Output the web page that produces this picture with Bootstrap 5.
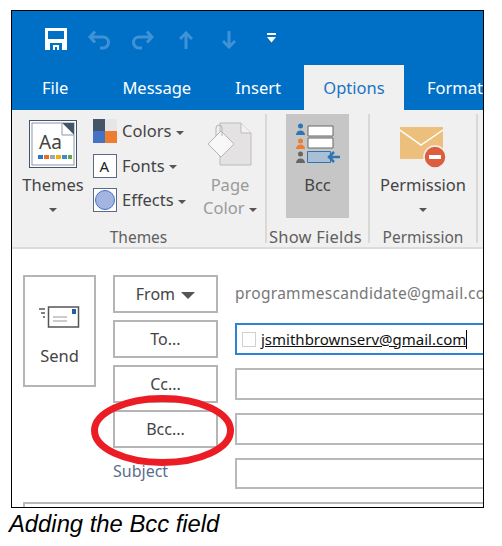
<!DOCTYPE html>
<html lang="en">
<head>
  <meta charset="UTF-8">
  <title>Adding the Bcc field</title>
  <meta name="viewport" content="width=device-width, initial-scale=1">
  <link href="https://cdn.jsdelivr.net/npm/bootstrap@5.3.0/dist/css/bootstrap.min.css" rel="stylesheet">
  <style>
    body { background: #fff; margin: 0; width: 502px; height: 546px; overflow: hidden; font-family: "Noto Sans", sans-serif; }
    .shot { position: relative; margin: 10px 0 0 11px; width: 473px; height: 498px; border: 1px solid #000; overflow: hidden; }
    .title-bar { height: 54px; background: #0070c6; padding-left: 33px; }
    .qat { width: 43px; }
    .tab-bar { height: 45px; background: #0070c6; }
    .tab-item { color: #fff; font-size: 16.500px; line-height: 45px; white-space: nowrap; }
    .tab-active { width: 103px; background: #f0f0f0; color: #1a74c4; text-align: center; }
    .ribbon { height: 139px; background: #f0f0f0; border-bottom: 2px solid #dcdcdc; padding-top: 4px; }
    .rb-group { height: 129px; border-right: 2px solid #d9d9d9; flex: none; }
    .rb-body { height: 104px; }
    .rb-label { text-align: center; color: #5f5f5f; font-size: 15.500px; line-height: 20px; margin-top: 9px; white-space: nowrap; }
    .rb-label-wide { font-size: 16.500px; letter-spacing: .2px; margin-right: 4px; }
    .rb-tool { text-align: center; color: #444; font-size: 16.500px; line-height: 23px; white-space: nowrap; }
    .rb-icon { height: 59px; }
    .rb-muted { color: #9a9a9a; }
    .rb-on { background: #c6c6c6; }
    .rb-small { font-size: 16.500px; color: #444; height: 34.500px; line-height: 24px; white-space: nowrap; }
    .rb-small svg { margin-right: 5px; flex: none; }
    .drop { display: inline-block; width: 0; height: 0; border-left: 4px solid transparent; border-right: 4px solid transparent; border-top: 4px solid #555; vertical-align: middle; }
    .mail-form { padding: 26px 0 0 11px; }
    .send-box { width: 73px; height: 112px; border: 2px solid #b5b5b5; margin-right: 17px; flex: none; font-size: 16.500px; color: #444; }
    .field-row { height: 38px; margin-bottom: 7px; }
    .addr-btn { width: 105px; height: 38px; flex: none; margin-right: 17px; padding: 0; background: #fff; border: 2px solid #b5b5b5; border-radius: 0; font-size: 16px; color: #444; }
    .addr-btn:hover { background: #fff; border-color: #b5b5b5; color: #444; }
    .from-caret { border-left-width: 7px; border-right-width: 7px; border-top-width: 7px; margin-left: 2px; }
    .addr-box { flex: none; width: 260px; height: 32px; border: 2px solid #b9b9b9; border-radius: 0; padding: 0 0 0 5px; background: #fff; }
    .addr-focus { border-color: #2a86d4; }
    .from-mail { color: #777; font-size: 15.500px; letter-spacing: .3px; white-space: nowrap; }
    .chk-box { width: 14px; height: 15px; border: 1px solid #d0d0d0; margin-right: 5px; flex: none; }
    .to-mail { font-size: 15px; color: #111; text-decoration: underline; border-right: 1px solid #000; line-height: 19px; white-space: nowrap; }
    .subject-label { width: 105px; margin-right: 17px; flex: none; color: #5a6d8f; font-size: 16px; padding-top: 4px; }
    .subject-row { height: 46px; }
    .subject-box { margin-top: 3px; height: 31px; }
    .body-box { height: 12px; margin-top: 1px; border: 2px solid #b9b9b9; border-right: 0; border-bottom: 0; }
    .red-ring { position: absolute; left: 78px; top: 383px; }
    .caption { margin: 2px 0 0 9px; font-family: "Liberation Sans", sans-serif; font-style: italic; font-size: 23.800px; line-height: 28px; color: #000; white-space: nowrap; }
  </style>
</head>
<body>
  <div class="shot">
    <!-- quick access -->
    <div class="title-bar d-flex align-items-center">
      <div class="qat">
        <svg width="22" height="22" viewBox="0 0 22 22"><path d="M0 0h22v22H0z" fill="#fff"/><path d="M3 3h16v8H3z" fill="#0070c6"/><path d="M5 15h12v7H5z" fill="#0070c6"/><path d="M8 17h6v5h-2v-3h-2v3H8z" fill="#fff"/></svg>
      </div>
      <div class="qat">
        <svg width="23" height="20" viewBox="0 0 23 20"><path d="M2 7h13a5.500 5.500 0 0 1 0 11h-3M7 1.500 2 7l5 5.500" fill="none" stroke="#3f92d6" stroke-width="3"/></svg>
      </div>
      <div class="qat" style="width:48px">
        <svg width="23" height="20" viewBox="0 0 23 20"><path d="M21 7H8a5.500 5.500 0 0 0 0 11h3M16 1.500 21 7l-5 5.500" fill="none" stroke="#3f92d6" stroke-width="3"/></svg>
      </div>
      <div class="qat">
        <svg width="14" height="18" viewBox="0 0 14 18"><path d="M7 18V2M1 8l6-6 6 6" fill="none" stroke="#3f92d6" stroke-width="3"/></svg>
      </div>
      <div class="qat" style="width:45px">
        <svg width="14" height="18" viewBox="0 0 14 18"><path d="M7 0v16M1 10l6 6 6-6" fill="none" stroke="#3f92d6" stroke-width="3"/></svg>
      </div>
      <svg width="9" height="10" viewBox="0 0 9 10"><path d="M0 0h9v2H0z" fill="#fff"/><path d="M0 4h9L4.500 9.500z" fill="#fff"/></svg>
    </div>

    <!-- tabs -->
    <div class="tab-bar d-flex">
      <div class="tab-item" style="margin-left:30px">File</div>
      <div class="tab-item" style="margin-left:54px">Message</div>
      <div class="tab-item" style="margin-left:44px">Insert</div>
      <div class="tab-item tab-active" style="margin-left:23px">Options</div>
      <div class="tab-item" style="margin-left:23px">Format</div>
    </div>

    <!-- ribbon -->
    <div class="ribbon d-flex">
      <div class="rb-group" style="width:255px">
        <div class="rb-body d-flex">
          <div class="rb-tool" style="width:62px;margin-left:10px">
            <div class="rb-icon d-flex align-items-center justify-content-center">
              <svg width="48" height="48" viewBox="0 0 48 48"><rect x=".5" y=".5" width="47" height="47" fill="#fff" stroke="#44546a"/><rect x="3" y="3" width="42" height="42" fill="#fff" stroke="#8a97a8"/><path d="M33 3h12v12z" fill="#44546a"/><path d="M33 3v12h12" fill="#fff" stroke="#8a97a8"/><text x="10" y="29" font-family="Noto Sans, sans-serif" font-size="19" fill="#444">Aa</text><path d="M9 35h5v4H9z" fill="#2f75c4"/><path d="M15 35h5v4h-5z" fill="#ed6c1f"/><path d="M21 35h5v4h-5z" fill="#a5a5a5"/><path d="M27 35h5v4h-5z" fill="#f0b400"/><path d="M33 35h5v4h-5z" fill="#3b8bd8"/><path d="M39 35h4v4h-4z" fill="#5ea83c"/></svg>
            </div>
            <div>Themes</div>
            <div><span class="drop"></span></div>
          </div>
          <div style="width:107px;margin-left:9px;padding-top:5px">
            <div class="rb-small d-flex align-items-start">
              <svg width="24" height="24" viewBox="0 0 24 24"><path d="M0 0h12v12H0z" fill="#44546a"/><path d="M12 0h12v12H12z" fill="#e7e6e6"/><path d="M0 12h12v12H0z" fill="#4472c4"/><path d="M12 12h12v12H12z" fill="#ed7d31"/></svg>
              <span>Colors <span class="drop"></span></span>
            </div>
            <div class="rb-small d-flex align-items-start">
              <svg width="24" height="24" viewBox="0 0 24 24"><rect x=".5" y=".5" width="23" height="23" fill="#fff" stroke="#5b6b84"/><text x="6.500" y="18" font-family="Noto Sans, sans-serif" font-size="15" fill="#222">A</text></svg>
              <span>Fonts <span class="drop"></span></span>
            </div>
            <div class="rb-small d-flex align-items-start">
              <svg width="24" height="24" viewBox="0 0 24 24"><rect x=".5" y=".5" width="23" height="23" fill="#fff" stroke="#5b6b84"/><circle cx="12" cy="12" r="9.500" fill="#a3b4e0" stroke="#4472c4"/></svg>
              <span>Effects <span class="drop"></span></span>
            </div>
          </div>
          <div class="rb-tool rb-muted" style="width:60px">
            <div class="rb-icon d-flex align-items-center justify-content-center">
              <svg width="46" height="44" viewBox="0 0 46 44"><path d="M13 1h21l10 10v32H13z" fill="#e4e2e2" stroke="#bdbbbb"/><path d="M34 1v10h10" fill="#f3f3f3" stroke="#bdbbbb"/><path d="M1 22 14 9l13 13-13 13z" fill="#f8f8f8" stroke="#b5b3b3"/><path d="M9 14V6a3 3 0 0 1 6 0v8" fill="none" stroke="#b5b3b3"/></svg>
            </div>
            <div>Page</div>
            <div>Color <span class="drop"></span></div>
          </div>
        </div>
        <div class="rb-label">Themes</div>
      </div>

      <div class="rb-group" style="width:103px">
        <div class="rb-body d-flex">
          <div class="rb-tool rb-on" style="width:63px;margin-left:19px">
            <div class="rb-icon d-flex align-items-center justify-content-center">
              <svg width="44" height="41" viewBox="0 0 44 41"><g fill="#2e75b6"><circle cx="4.500" cy="3" r="2.500"/><path d="M0 12a4.500 4.500 0 0 1 9 0z"/></g><g fill="#ed7d31"><circle cx="4.500" cy="18" r="2.500"/><path d="M0 26a4.500 4.500 0 0 1 9 0z"/></g><g fill="#666"><circle cx="4.500" cy="31" r="2.500"/><path d="M0 40a4.500 4.500 0 0 1 9 0z"/></g><g stroke="#666"><path d="M12 3h25v10H12z" fill="#fff"/><path d="M12 15h25v10H12z" fill="#fff"/></g><path d="M11.500 28.500h23v11h-23z" fill="#a9bfd6" stroke="#2e75b6"/><path d="M44 34H34M38 29l-5 5 5 5" fill="none" stroke="#2e75b6" stroke-width="2.500"/></svg>
            </div>
            <div>Bcc</div>
          </div>
        </div>
        <div class="rb-label rb-label-wide">Show Fields</div>
      </div>

      <div class="rb-group" style="width:108px">
        <div class="rb-body">
          <div class="rb-tool">
            <div class="rb-icon d-flex align-items-center justify-content-center">
              <svg width="46" height="41" viewBox="0 0 46 41" style="margin-top:8px"><path d="M0 0h43v32H0z" fill="#ecc07c"/><path d="M0 3l21 15L43 3" fill="none" stroke="#fff" stroke-width="1.500"/><circle cx="35" cy="30" r="11" fill="#dd5e3f" stroke="#f0f0f0" stroke-width="1.500"/><path d="M29 28h12v4H29z" fill="#fff"/></svg>
            </div>
            <div>Permission</div>
            <div><span class="drop"></span></div>
          </div>
        </div>
        <div class="rb-label">Permission</div>
      </div>
    </div>

    <!-- message header -->
    <div class="mail-form">
      <div class="d-flex">
        <div class="send-box d-flex flex-column align-items-center" style="padding-top:29px">
          <svg width="41" height="22" viewBox="0 0 41 22"><path d="M9.500 1h30v20h-30z" fill="#fff" stroke="#555" stroke-width="1.500"/><path d="M14 11h14M14 15h14" stroke="#999"/><path d="M33 3h4v5h-4z" fill="#1f5fa8"/><path d="M0 3h6M2 7h4M4 11h2" stroke="#555" stroke-width="1.500"/></svg>
          <div class="mt-3">Send</div>
        </div>
        <div class="flex-grow-1">
          <div class="field-row d-flex align-items-center">
            <button class="btn addr-btn">From <span class="drop from-caret"></span></button>
            <div class="from-mail">programmescandidate@gmail.com</div>
          </div>
          <div class="field-row d-flex align-items-center">
            <button class="btn addr-btn">To...</button>
            <div class="addr-box addr-focus d-flex align-items-center">
              <span class="chk-box"></span>
              <span class="to-mail">jsmithbrownserv@gmail.com</span>
            </div>
          </div>
          <div class="field-row d-flex align-items-center">
            <button class="btn addr-btn">Cc...</button>
            <div class="addr-box"></div>
          </div>
          <div class="field-row d-flex align-items-center">
            <button class="btn addr-btn">Bcc...</button>
            <div class="addr-box"></div>
          </div>
          <div class="subject-row d-flex">
            <div class="subject-label">Subject</div>
            <div class="addr-box subject-box"></div>
          </div>
        </div>
      </div>
      <div class="body-box"></div>
    </div>

    <!-- red marker ring -->
    <svg class="red-ring" width="146" height="74" viewBox="0 0 146 74"><ellipse cx="72.500" cy="36.500" rx="68" ry="32" fill="none" stroke="#ec1c24" stroke-width="7"/></svg>
  </div>
  <div class="caption">Adding the Bcc field</div>
  <script src="https://cdn.jsdelivr.net/npm/bootstrap@5.3.0/dist/js/bootstrap.bundle.min.js"></script>
</body>
</html>
